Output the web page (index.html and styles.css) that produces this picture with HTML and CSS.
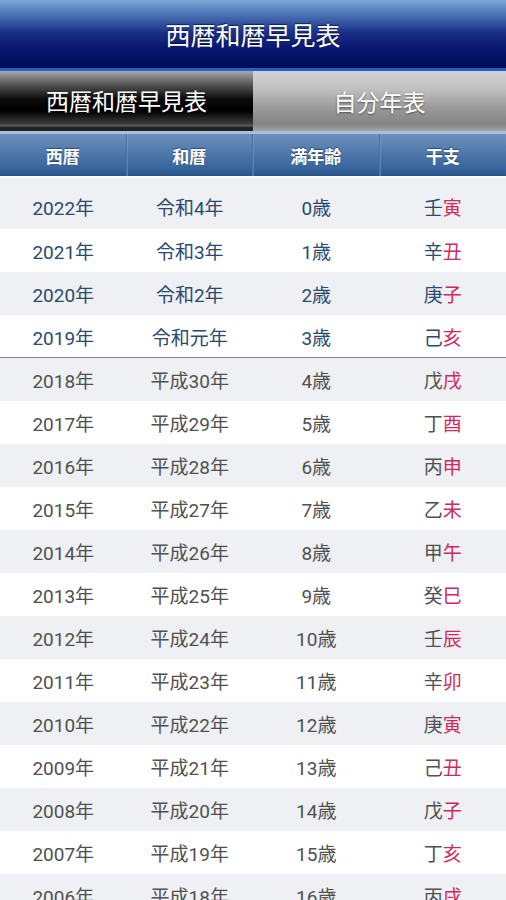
FILE: index.html
```html
<!DOCTYPE html>
<html lang="ja">
<head>
    <meta charset="UTF-8">
    <meta name="viewport" content="width=device-width, initial-scale=1.0">
    <title>西暦和暦早見表</title>
    <link rel="stylesheet" href="styles.css">
</head>
<body>
    <header class="titlebar">
        <h1>西暦和暦早見表</h1>
    </header>
    <nav class="tabs">
        <div class="tab active">西暦和暦早見表</div>
        <div class="tab">自分年表</div>
    </nav>
    <div class="table-head">
        <div class="th">西暦</div>
        <div class="th">和暦</div>
        <div class="th">満年齢</div>
        <div class="th">干支</div>
    </div>
    <div class="table-body">
        <div class="row reiwa first"><span>2022年</span><span>令和4年</span><span>0歳</span><span>壬<em>寅</em></span></div>
        <div class="row reiwa"><span>2021年</span><span>令和3年</span><span>1歳</span><span>辛<em>丑</em></span></div>
        <div class="row reiwa"><span>2020年</span><span>令和2年</span><span>2歳</span><span>庚<em>子</em></span></div>
        <div class="row reiwa last"><span>2019年</span><span>令和元年</span><span>3歳</span><span>己<em>亥</em></span></div>
        <div class="row"><span>2018年</span><span>平成30年</span><span>4歳</span><span>戊<em>戌</em></span></div>
        <div class="row"><span>2017年</span><span>平成29年</span><span>5歳</span><span>丁<em>酉</em></span></div>
        <div class="row"><span>2016年</span><span>平成28年</span><span>6歳</span><span>丙<em>申</em></span></div>
        <div class="row"><span>2015年</span><span>平成27年</span><span>7歳</span><span>乙<em>未</em></span></div>
        <div class="row"><span>2014年</span><span>平成26年</span><span>8歳</span><span>甲<em>午</em></span></div>
        <div class="row"><span>2013年</span><span>平成25年</span><span>9歳</span><span>癸<em>巳</em></span></div>
        <div class="row"><span>2012年</span><span>平成24年</span><span>10歳</span><span>壬<em>辰</em></span></div>
        <div class="row"><span>2011年</span><span>平成23年</span><span>11歳</span><span>辛<em>卯</em></span></div>
        <div class="row"><span>2010年</span><span>平成22年</span><span>12歳</span><span>庚<em>寅</em></span></div>
        <div class="row"><span>2009年</span><span>平成21年</span><span>13歳</span><span>己<em>丑</em></span></div>
        <div class="row"><span>2008年</span><span>平成20年</span><span>14歳</span><span>戊<em>子</em></span></div>
        <div class="row"><span>2007年</span><span>平成19年</span><span>15歳</span><span>丁<em>亥</em></span></div>
        <div class="row"><span>2006年</span><span>平成18年</span><span>16歳</span><span>丙<em>戌</em></span></div>
    </div>
</body>
</html>
```

FILE: styles.css
```css
body {
    margin: 0;
    background: #fff;
    font-family: Roboto, "Noto Sans CJK JP", sans-serif;
    overflow: hidden;
}
.titlebar {
    height: 68px;
    background: linear-gradient(#78a8d6 0%, #4a72b4 22%, #1a2f86 48%, #06146a 75%, #000c56 100%);
    border-bottom: 3px solid #1e62c8;
    display: flex;
    align-items: center;
    justify-content: center;
}
.titlebar h1 {
    margin: 0;
    color: #fff;
    font-size: 25px;
    font-weight: normal;
    text-shadow: 0 -1px 1px rgba(0,0,0,0.6);
}
.tabs {
    display: flex;
    height: 60px;
    background: #8c8c8c;
}
.tab {
    flex: 1;
    display: flex;
    align-items: center;
    justify-content: center;
    color: #fff;
    font-size: 23px;
    text-shadow: 0 1px 2px rgba(0,0,0,0.5);
    background: linear-gradient(#d2d2d2 0%, #c0c0c0 30%, #9c9c9c 60%, #848484 88%, #a4a4a4 100%);
}
.tab.active {
    background: linear-gradient(#a8a8a8 0%, #505050 25%, #0a0a0a 50%, #000 70%, #3a3a3a 92%, #5a5a5a 96%, #1a1a1a 100%);
    border-bottom: 3px solid #222;
    flex: 0 0 253px;
}
.table-head {
    display: grid;
    grid-template-columns: repeat(4, 1fr);
    height: 42px;
    border-top: 3px solid #a9c0da;
    background: linear-gradient(#6b90be 0%, #4f78aa 45%, #35639a 85%, #24528a 100%);
    border-bottom: 2px solid #fff;
}
.th {
    display: flex;
    align-items: center;
    justify-content: center;
    color: #fff;
    font-size: 17px;
    font-weight: bold;
    text-shadow: 0 -1px 1px rgba(0,0,0,0.4);
    border-right: 1px solid #4870a0;
    box-shadow: 1px 0 0 rgba(140,170,210,0.4);
}
.th:last-child {
    border-right: none;
    box-shadow: none;
}
.row {
    display: grid;
    grid-template-columns: repeat(4, 1fr);
    height: 43px;
    align-items: center;
    text-align: center;
    font-size: 19px;
    color: #505050;
}
.row:nth-child(odd) {
    background: #eef0f3;
}
.row.first {
    height: 51px;
    box-sizing: border-box;
    align-items: start;
    padding-top: 19px;
}
.row.first span {
    line-height: 24px;
}
.row.reiwa {
    color: #2b4a6d;
}
.row.last {
    border-bottom: 1px solid #888;
    height: 42px;
}
.row em {
    font-style: normal;
    color: #d3285a;
}
```
